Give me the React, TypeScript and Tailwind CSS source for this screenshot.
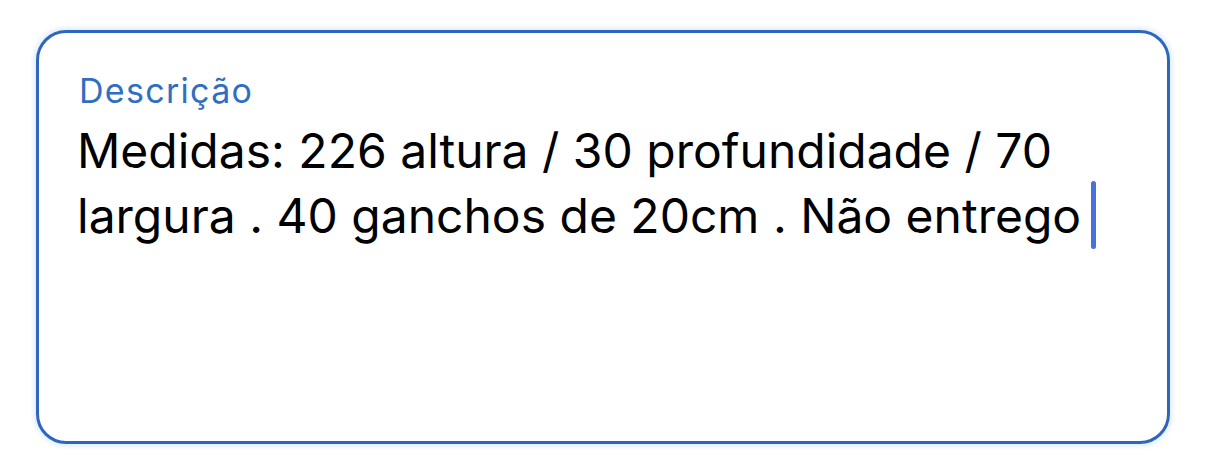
export default function App() {
  return (
    <div className="w-[1206px] h-[466px] bg-white pt-[30px] pl-[36px]" style={{ fontFamily: 'Inter, "Liberation Sans", sans-serif' }}>
      <div className="w-[1134px] h-[414px] rounded-[30px] border-[3px] border-[#2f66bd] shadow-[0_0_4px_3px_#e3f0fd] pl-[38px] pt-[38px]">
        <div className="ml-[2px] text-[34px] leading-[40px] text-[#2f6fc2] tracking-[1.3px]">Descrição</div>
        <div className="mt-[10px] text-[48px] leading-[60px] text-black">
          Medidas: 226 altura / 30 profundidade / 70
          <br />
          largura . 40 ganchos de 20cm . Não entrego
          <span className="inline-block align-[-16px] ml-[10px] w-[5px] h-[68px] rounded-full bg-[#4a70d9]" />
        </div>
      </div>
    </div>
  );
}
